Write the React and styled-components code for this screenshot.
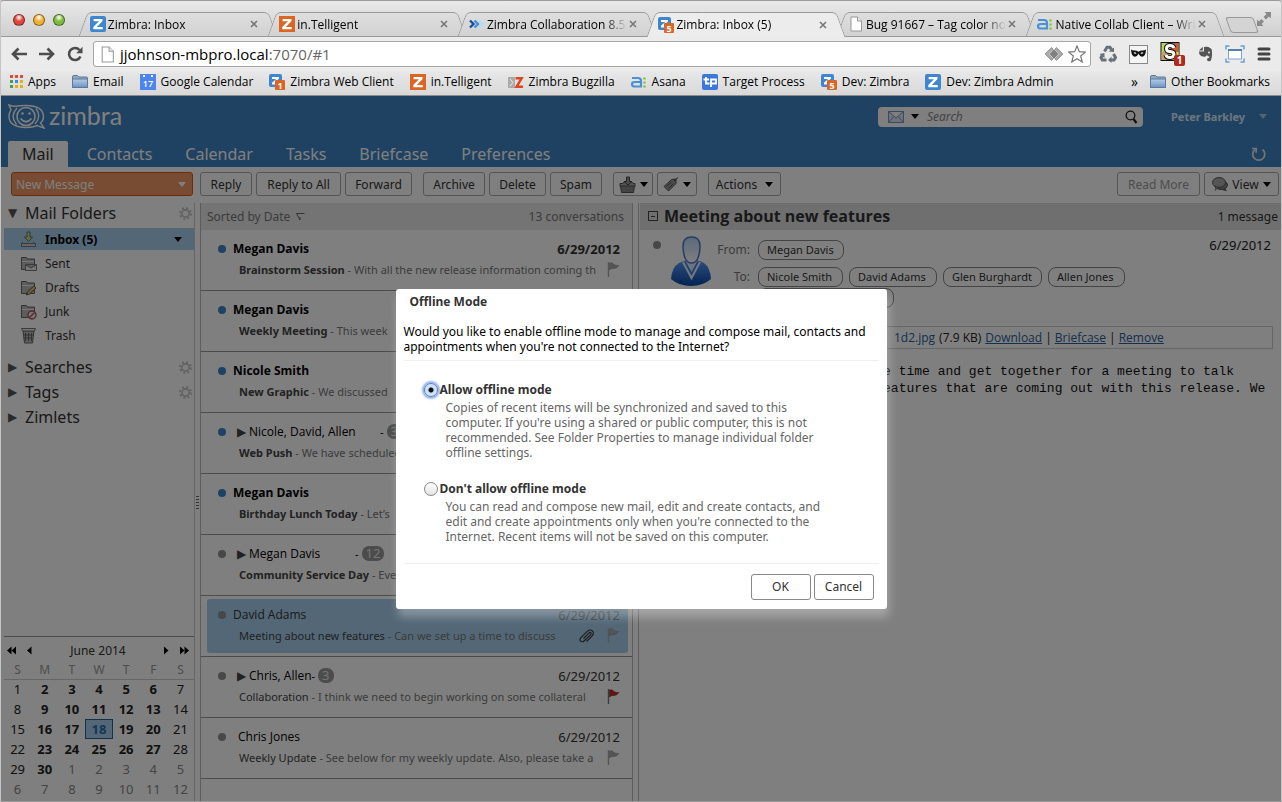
import React from 'react';
import styled, { createGlobalStyle, css } from 'styled-components';


const GlobalStyle = createGlobalStyle`
  * {
    box-sizing: border-box;
  }

  body {
    margin: 0;
    background: #c9c9c9;
    font-family: "Open Sans", "Noto Sans", sans-serif;
    font-size: 12px;
    color: #333;
  }

  a {
    color: inherit;
    text-decoration: none;
  }

  button, input {
    font-family: inherit;
    font-size: inherit;
    color: inherit;
  }
`;


/* ---------- icons ---------- */

const ZIcon = ({ color = '#3f86cf', badge, square }) => (
  <svg width="16" height="16" viewBox="0 0 16 16" aria-hidden="true">
    <rect width={badge ? 13 : 16} height={badge ? 13 : 16} rx={square ? 0 : 2} fill={color} />
    {badge
      ? <path d="M3 3h7v1.600L5.600 8.600H8V10.500H3V8.800L7.200 4.900H3z" fill="#fff" />
      : <path d="M3.600 3h8.900v2L6.900 11h5.800v2.200H3.300v-2.100L8.900 5.200H3.600z" fill="#fff" />}
    {badge && <rect x="6" y="6" width="10" height="10" rx="1" fill="#dc6526" />}
    {badge && <text x="11" y="14.500" fontSize="9" fontWeight="700" textAnchor="middle" fill="#fff">{badge}</text>}
  </svg>
);

const PageIcon = ({ size = 16 }) => (
  <svg width={size} height={size} viewBox="0 0 16 16" aria-hidden="true">
    <path d="M3 1h6.500L13.500 5v10H3z" fill="#fff" stroke="#999" />
    <path d="M9.500 1v4h4" fill="#eee" stroke="#999" />
  </svg>
);

const ChevronsIcon = () => (
  <svg width="16" height="16" viewBox="0 0 16 16" fill="none" strokeWidth="2.400" aria-hidden="true">
    <path d="M1 4.500l3.500 3.500L1 11.500" stroke="#1b4f9c" />
    <path d="M5.500 4.500L9 8l-3.500 3.500" stroke="#3f8fe0" />
    <path d="M10 4.500l3.500 3.500-3.500 3.500" stroke="#b5dcf7" />
  </svg>
);

const AsanaIcon = () => (
  <svg width="16" height="16" viewBox="0 0 16 16" aria-hidden="true">
    <path d="M1 4h6q3 0 3 3v5.500H4q-3 0-3-2.300T4 8h6" fill="none" stroke="#4a90d6" strokeWidth="2.200" />
    <g fill="#8dc63f">
      <circle cx="13.500" cy="4.500" r="1.300" />
      <circle cx="13.500" cy="8.500" r="1.300" />
      <circle cx="13.500" cy="12.500" r="1.300" />
    </g>
  </svg>
);

const FolderIcon = () => (
  <svg width="16" height="16" viewBox="0 0 16 16" aria-hidden="true">
    <defs>
      <linearGradient id="blueFolder" x1="0" y1="0" x2="0" y2="1">
        <stop offset="0" stopColor="#b4cdea" />
        <stop offset="1" stopColor="#6d93c0" />
      </linearGradient>
    </defs>
    <path d="M.5 3q0-1.500 1.500-1.500h3.500L7 3h7.500q1 0 1 1v9.500H.5z" fill="#8fa9c8" stroke="#5f7898" />
    <path d="M.5 5h15v8.500H.5z" fill="url(#blueFolder)" stroke="#5f7898" />
  </svg>
);

const AppsIcon = () => (
  <svg width="13" height="13" viewBox="0 0 13 13" aria-hidden="true">
    {['#dd4b39', '#dd4b39', '#dd4b39', '#4a9c5b', '#4285f4', '#e8b004', '#4a9c5b', '#e8b004', '#e8b004'].map((fill, i) => (
      <rect key={i} x={(i % 3) * 5} y={Math.floor(i / 3) * 5} width="3" height="3" fill={fill} />
    ))}
  </svg>
);

const CalendarIcon = () => (
  <svg width="16" height="16" viewBox="0 0 16 16" aria-hidden="true">
    <rect width="16" height="16" fill="#4b86f0" />
    <rect x="3" y="1" width="2" height="2" fill="#fff" />
    <rect x="11" y="1" width="2" height="2" fill="#fff" />
    <text x="8" y="13" fontSize="9" fontWeight="600" textAnchor="middle" fill="#fff">17</text>
  </svg>
);

const BugzillaIcon = () => (
  <svg width="16" height="16" viewBox="0 0 16 16" aria-hidden="true">
    <rect y="3" width="7" height="11" fill="#aaa" />
    <path d="M2 5l3 3.500-3 3.500" stroke="#eee" fill="none" />
    <path d="M7.500 4.200h6.200L8.500 12.800h6.500" fill="none" stroke="#e0451f" strokeWidth="2.400" />
  </svg>
);

const TargetIcon = () => (
  <svg width="16" height="16" viewBox="0 0 16 16" aria-hidden="true">
    <rect width="16" height="16" rx="2" fill="#3c78dc" />
    <path d="M4 3v6.500h3.500M1.500 5.500H7M9 13V5.500h5v4H9" fill="none" stroke="#fff" strokeWidth="1.800" />
  </svg>
);

const BackIcon = ({ flip }) => (
  <svg width="16" height="16" viewBox="0 0 16 16" fill="none" stroke="#4d4d4d" strokeWidth="2.600" aria-hidden="true">
    {flip ? <path d="M0 8h14M8.500 2.500L14 8l-5.500 5.500" /> : <path d="M16 8H2M7.500 2.500L2 8l5.500 5.500" />}
  </svg>
);

const ReloadIcon = () => (
  <svg width="16" height="16" viewBox="0 0 16 16" aria-hidden="true">
    <path d="M13.500 10.500A6 6 0 1 1 12.500 4" fill="none" stroke="#4d4d4d" strokeWidth="2.600" />
    <path d="M15.500.8v6.400H9.200z" fill="#4d4d4d" />
  </svg>
);

const DiamondsIcon = () => (
  <svg width="20" height="16" viewBox="0 0 20 16" aria-hidden="true">
    <path d="M7.500 1.500L1 8l6.500 6.500L9 13 4.500 8 9 3zM12.500 1.500L19 8l-6.500 6.500L11 13l4.500-5L11 3z" fill="#aaa" stroke="#999" />
    <path d="M10 3l4.500 5L10 13 5.500 8z" fill="#808080" />
  </svg>
);

const StarIcon = () => (
  <svg width="18" height="18" viewBox="0 0 18 18" aria-hidden="true">
    <path d="M9 1l2.300 5.700 6 .4-4.600 3.900 1.500 6L9 13.700 3.800 17l1.500-6L.7 7.100l6-.4z" fill="#fff" stroke="#777" strokeWidth="1.200" />
  </svg>
);

const RecycleIcon = () => (
  <svg width="18" height="18" viewBox="0 0 18 18" fill="none" stroke="#687078" strokeWidth="3" aria-hidden="true">
    <path d="M5.500 6.500L8 2.200h3l1.500 2.600" />
    <path d="M14.500 9l2 3.500-1.500 2.500h-3" />
    <path d="M7.500 15H3.300L2 12.500l1.500-2.500" />
    <path d="M9.500 6.500L15 7V2.500zM12.500 11.500v6.500L9 15zM.5 9l5-1v5z" fill="#687078" stroke="none" />
  </svg>
);

const MaskIcon = () => (
  <svg width="19" height="19" viewBox="0 0 19 19" aria-hidden="true">
    <rect x=".5" y=".5" width="18" height="18" fill="#f4f4f4" stroke="#888" />
    <path d="M2 4.500q1.500 1.200 4 1 2 0 3.500 1.200Q11 5.500 13 5.500q2.500.2 4-1-.3 7-4 7.300-2 0-3.500-3-1.500 3-3.500 3-3.700-.3-4-7.300z" fill="#111" />
    <path d="M4.500 8q1.500-1.500 3 .5-1.500.8-3-.5zM11.500 8.500q1.500-2 3-.5-1.500 1.300-3 .5z" fill="#fff" />
  </svg>
);

const StumbleIcon = () => (
  <svg width="26" height="24" viewBox="0 0 26 24" aria-hidden="true">
    <rect x="1" y=".5" width="18" height="18" fill="#b8d060" stroke="#111" />
    <path d="M10 1h8.500v9H10z" fill="#c0603c" />
    <path d="M1.500 10h8.500v8H1.500z" fill="#c8a070" />
    <path d="M10 10h8.500v8H10z" fill="#e8d040" />
    <path d="M14 6Q13 3.500 10 3.500 6.500 3.500 6.500 6.500t3.500 3q4 .3 4 3T10 15.500Q6.500 15.500 6 13" fill="none" stroke="#111" strokeWidth="5" />
    <path d="M14 6Q13 3.500 10 3.500 6.500 3.500 6.500 6.500t3.500 3q4 .3 4 3T10 15.500Q6.500 15.500 6 13" fill="none" stroke="#fff" strokeWidth="3" />
    <rect x="14" y="13" width="11" height="11" rx="2" fill="#b02a20" />
    <text x="19.500" y="22" fontSize="10" fontWeight="700" textAnchor="middle" fill="#fff">1</text>
  </svg>
);

const ElephantIcon = () => (
  <svg width="15" height="16" viewBox="0 0 15 16" aria-hidden="true">
    <path d="M1 4.500L4.800.8v3.700z" fill="#555" />
    <path d="M6 1q4-1 6 1 2 .5 2 4 .300 6-1.500 9-3.500 1-3.500-1.500 0-2 2-1.500l.5-1.500q-2 0-2.500-1.500-1 2.500-4 1.500Q1 10 1 5.500h5z" fill="#555" />
    <circle cx="11" cy="6.500" r="1" fill="#e8e8e8" />
  </svg>
);

const CaptureIcon = () => (
  <svg width="20" height="18" viewBox="0 0 20 18" fill="none" aria-hidden="true">
    <path d="M1 4.500V1h3.500M15.500 1H19v3.500M19 13.500V17h-3.500M4.500 17H1v-3.500" stroke="#6c9fd4" strokeWidth="1.500" />
    <rect x="3.500" y="4.500" width="13" height="9.500" fill="#fff" stroke="#7fa6cf" />
    <path d="M3 5h14" stroke="#5580b0" strokeWidth="2" />
  </svg>
);

const MenuIcon = () => (
  <svg width="14" height="14" viewBox="0 0 14 14" stroke="#444" strokeWidth="3" strokeLinecap="round" aria-hidden="true">
    <path d="M2 2h10M2 7h10M2 12h10" />
  </svg>
);

const FullscreenIcon = () => (
  <svg width="16" height="16" viewBox="0 0 16 16" aria-hidden="true">
    <path d="M8.500 1H15v6.500l-2-2-3 3L7.500 6l3-3zM1 8.500l2 2 2.500-2.500L8 10.500 5.500 13l2 2H1z" fill="#8a8a8a" />
  </svg>
);

const CloseIcon = () => (
  <svg width="8" height="8" viewBox="0 0 8 8" stroke="#777" strokeWidth="1.600" aria-hidden="true">
    <path d="M1 1l6 6M7 1L1 7" />
  </svg>
);

const LogoMark = () => (
  <svg width="37" height="25" viewBox="0 0 37 25" fill="none" stroke="#fff" strokeWidth="1.400" aria-hidden="true">
    <path d="M1 1q3 1.500 7 1.200Q11 1.500 18 1.500q17 0 17.500 11 0 4-3 6.500l3.500 5q-4-1-6.500-2.500Q25 23.500 18 23.500 1 23 1 12.500q0-4 2-6.500z" />
    <path d="M28 4.500q6 8-1 15.500M9 4q-7.500 8-.5 16.500" />
    <circle cx="18" cy="12.500" r="9" strokeWidth="1.600" />
    <path d="M12.500 14.500q5.500 6.500 11 0" strokeWidth="1.800" />
    <circle cx="14.500" cy="9.500" r="1.300" fill="#fff" stroke="none" />
    <circle cx="21.500" cy="9.500" r="1.300" fill="#fff" stroke="none" />
  </svg>
);

const EnvelopeIcon = () => (
  <svg width="16" height="12" viewBox="0 0 16 12" fill="#dfe8f6" stroke="#7890b8" aria-hidden="true">
    <path d="M.5.5h15v11H.5zM.5.5L8 7l7.500-6.500M.5 11.500l5.500-6M15.500 11.500l-5.500-6" />
  </svg>
);

const SearchIcon = () => (
  <svg width="13" height="14" viewBox="0 0 13 14" fill="none" stroke="#222" aria-hidden="true">
    <circle cx="5.500" cy="5.500" r="4.300" strokeWidth="1.300" />
    <path d="M8.500 9l3 4" strokeWidth="2.200" />
  </svg>
);

const RefreshIcon = () => (
  <svg width="16" height="16" viewBox="0 0 16 16" fill="none" stroke="#e8e8e8" strokeWidth="1.700" aria-hidden="true">
    <path d="M11.500 3.500A6 6 0 1 1 4 3.500" />
    <path d="M1 2.500h4.200v4.200" />
  </svg>
);

const GearIcon = () => (
  <svg width="13" height="13" viewBox="0 0 13 13" fill="none" stroke="#c4c4c4" aria-hidden="true">
    <circle cx="6.500" cy="6.500" r="3.600" strokeWidth="1.600" />
    <circle cx="6.500" cy="6.500" r="5.400" strokeWidth="2" strokeDasharray="2.100 2.140" />
  </svg>
);

const MoveIcon = () => (
  <svg width="17" height="17" viewBox="0 0 17 17" aria-hidden="true">
    <path d="M1 7.500h3l1-1.500h8l1 1.500h2v3H1z" fill="#aaa" stroke="#555" />
    <path d="M1.500 10h14l-1 6.500h-12z" fill="#888" stroke="#555" />
    <path d="M7.500 1h3v4.500h2.500L9 9 5 5.500h2.500z" fill="#999" stroke="#444" />
  </svg>
);

const TagIcon = () => (
  <svg width="16" height="15" viewBox="0 0 16 15" aria-hidden="true">
    <path d="M1 9.500L8.500 2.500l4.500-.5v4.500L5.500 14z" fill="#999" stroke="#555" />
    <path d="M3.500 9.500l5-4.500M5.500 11.500l5-5" stroke="#555" />
    <path d="M11 4L15 .5" stroke="#444" />
  </svg>
);

const ChatIcon = () => (
  <svg width="16" height="15" viewBox="0 0 16 15" aria-hidden="true">
    <path d="M9 12q3 2.500 6 2-2-2-1.500-4z" fill="#666" />
    <ellipse cx="9" cy="8" rx="6.500" ry="4.500" fill="#888" stroke="#555" />
    <ellipse cx="7" cy="5.500" rx="6.500" ry="5" fill="#aaa" stroke="#555" />
    <path d="M4 10l-1 3.500L7 10z" fill="#999" stroke="#555" strokeWidth=".5" />
  </svg>
);

const FlagIcon = ({ red }) => (
  <svg width="13" height="15" viewBox="0 0 13 15" aria-hidden="true">
    <path d="M1.500 0v15" stroke={red ? '#778' : '#aaa'} strokeWidth="1.400" />
    <path d="M2.500 1q3-1 4.500 1.500 2 1.300 5 1Q10 6.500 7 6.500 4.500 6 2.500 8z" fill={red ? '#c22c22' : '#aaa'} stroke={red ? '#802020' : '#888'} strokeWidth=".5" />
  </svg>
);

const ClipIcon = () => (
  <svg width="15" height="14" viewBox="0 0 15 14" fill="none" stroke="#333" strokeWidth="1.100" aria-hidden="true">
    <path d="M4.500 9.500l5.700-5.700q1-.8 1.700 0t-.2 1.800L5 12q-1.800 1.500-3.300.2T1.900 8.700L8.300 2.300Q11 0 13.200 1.800t.2 4.900L7.500 12.500" />
  </svg>
);

const AvatarIcon = () => (
  <svg width="40" height="50" viewBox="0 0 40 50" aria-hidden="true">
    <defs>
      <linearGradient id="shirt" x1="0" y1="0" x2="0" y2="1">
        <stop offset="0" stopColor="#5a9af8" />
        <stop offset="1" stopColor="#0848a8" />
      </linearGradient>
      <linearGradient id="face" x1="0" y1="0" x2="0" y2="1">
        <stop offset="0" stopColor="#b8d0f8" />
        <stop offset="1" stopColor="#ffffff" />
      </linearGradient>
    </defs>
    <path d="M8 27q5-2 8-3h9q4 1 8 3 6 4 7 16-8 7-20 7T0 43Q1 31 8 27z" fill="url(#shirt)" />
    <path d="M12 26l8.500 16L29 26" fill="#4080e0" stroke="#e8f0ff" strokeWidth="2" />
    <path d="M14 24l6.500 12L27 24z" fill="#dce8ff" />
    <path d="M9 44l2 4M31 44l-2 4" stroke="#0a3c90" />
    <path d="M12 10Q12 1 20.500 1T29 10q0 8-2.500 13-2 4-6 4t-6-4Q12 18 12 10z" fill="url(#face)" stroke="#4878d0" strokeWidth="1.500" />
  </svg>
);

const SortIcon = () => (
  <svg width="9" height="9" viewBox="0 0 9 9" fill="none" stroke="#666" aria-hidden="true">
    <path d="M8.500 1.500h-8l3.500 6.500v-3" />
  </svg>
);

const StepIcon = ({ left, twice }) => (
  <svg width={twice ? 9 : 5} height="9" viewBox={twice ? '0 0 9 9' : '0 0 5 9'} fill="#000" aria-hidden="true">
    <path d={left ? 'M4.500.5v8L0 4.500z' : 'M0 .5v8l4.500-4z'} />
    {twice && <path d={left ? 'M9 .5v8L4.500 4.500z' : 'M4.500.5v8L9 4.500z'} />}
  </svg>
);

/* Folder glyphs share a drawer shape with a small mark over it. */
const FolderGlyph = ({ kind }) => (
  <svg width="17" height="17" viewBox="0 0 17 17" fill="none" aria-hidden="true">
    {kind === 'inbox' && (
      <>
        <path d="M2.500 10.500L1 15.500h14l-1.500-5" stroke="#888" />
        <rect x="1.500" y="12.500" width="14" height="3" fill="#ccc" stroke="#777" />
        <path d="M7 1h3v5h2.500l-4 4.500-4-4.500H7z" fill="#c8d4a0" stroke="#667040" />
      </>
    )}
    {kind === 'trash' && (
      <>
        <path d="M3 4l1.500 12h8L14 4z" fill="#bbb" stroke="#666" />
        <path d="M5.500 6v8M8.500 6v8M11.500 6v8M4 8h9M4.500 11h8" stroke="#666" />
        <path d="M1.500 1.500h14l-1 2.500h-12z" fill="#eee" stroke="#777" />
      </>
    )}
    {['sent', 'drafts', 'junk'].includes(kind) && (
      <>
        <path d="M1.500 14.500v-12h5l1 1.500h7v10.500z" fill="#bbb" stroke="#666" />
        <path d="M2 6.500h12" stroke="#eee" />
      </>
    )}
    {kind === 'sent' && <path d="M5.500 9.500h11v6h-11zM6 10l5 3 5-3" fill="#eee" stroke="#777" />}
    {kind === 'drafts' && <path d="M6.500 16l.8-3 6.500-6 2.200 2-6.500 6z" fill="#e0c070" stroke="#554" />}
    {kind === 'junk' && (
      <>
        <circle cx="12" cy="12" r="4" fill="#eee" stroke="#b05060" strokeWidth="1.400" />
        <path d="M9.500 14.500l5-5" stroke="#b05060" strokeWidth="1.400" />
      </>
    )}
  </svg>
);


/* ---------- browser window ---------- */

const Window = styled.div`
  display: flex;
  flex-direction: column;
  height: 100vh;
  min-height: 600px;
  border: 1px solid #9a9a9a;
  border-left-color: #c4c4c4;
  border-right-color: #c4c4c4;
  border-radius: 4px 4px 0 0;
  overflow: hidden;
`;

const TabStrip = styled.div`
  display: flex;
  align-items: flex-end;
  height: 36px;
  padding-left: 12px;
  border-bottom: 1px solid #999;
  background: linear-gradient(#e9e9e9, #cfcfcf);
`;

const Lights = styled.div`
  display: flex;
  gap: 8px;
  width: 70px;
  padding-bottom: 10px;
`;

const Light = styled.button`
  width: 12px;
  height: 12px;
  padding: 0;
  border: 1px solid rgba(0, 0, 0, 0.45);
  border-radius: 50%;
  background: radial-gradient(circle at 50% 25%, #fff 0%, ${props => props.$color} 45%);
`;

const tabEdge = css`
  content: "";
  position: absolute;
  z-index: -1;
  top: 0;
  bottom: 0;
  border: 1px solid #999;
  border-bottom: none;
  background: ${props => props.$active ? '#ececec' : 'linear-gradient(#dedede, #d2d2d2)'};
`;

const Tab = styled.div`
  position: relative;
  isolation: isolate;
  z-index: ${props => props.$active ? 2 : 1};
  display: flex;
  flex: 0 1 190px;
  align-items: center;
  gap: 2px;
  min-width: 0;
  height: ${props => props.$active ? 25 : 24}px;
  margin-bottom: ${props => props.$active ? '-1px' : 0};
  padding: 0 14px 0 7px;
  color: #000;

  &::before {
    ${tabEdge}
    left: 0;
    right: 30%;
    border-right: none;
    border-top-left-radius: 5px;
    transform: skewX(-20deg);
  }

  &::after {
    ${tabEdge}
    left: 30%;
    right: 0;
    border-left: none;
    border-top-right-radius: 5px;
    transform: skewX(20deg);
  }

  svg {
    flex: none;
  }
`;

const TabTitle = styled.a`
  flex: 1;
  overflow: hidden;
  white-space: nowrap;
  mask-image: linear-gradient(to right, #000 84%, transparent);
`;

const PlainButton = styled.button`
  display: inline-flex;
  align-items: center;
  flex: none;
  padding: 0;
  border: none;
  background: none;
`;

const NewTab = styled.button`
  flex: none;
  width: 28px;
  height: 16px;
  margin: 0 0 3px 8px;
  border: 1px solid #999;
  border-radius: 3px;
  background: #d4d4d4;
  transform: skewX(20deg);
`;

const Fullscreen = styled(PlainButton)`
  margin: 0 9px 9px auto;
`;

const AddressRow = styled.div`
  display: flex;
  align-items: center;
  gap: 12px;
  height: 34px;
  padding: 0 10px;
  background: #ebebeb;
`;

const Omnibox = styled.div`
  display: flex;
  flex: 1;
  align-items: center;
  gap: 4px;
  height: 26px;
  margin-left: -2px;
  padding: 0 4px 0 5px;
  border: 1px solid #a8a8a8;
  border-radius: 3px;
  background: #fff;
`;

const Address = styled.div`
  flex: 1;
  color: #666;
  font-size: 15px;

  b {
    color: #000;
    font-weight: 400;
  }
`;

const Extensions = styled.div`
  display: flex;
  align-items: center;
  gap: 12px;
  margin-left: -4px;
`;

const BookmarkRow = styled.nav`
  display: flex;
  align-items: center;
  gap: 16px;
  height: 25px;
  padding: 0 11px 3px 9px;
  border-bottom: 1px solid #8c8c8c;
  background: linear-gradient(#e8e8e8, #d8d8d8);
`;

const Bookmark = styled.a`
  display: flex;
  align-items: center;
  gap: 5px;
  color: #000;
  white-space: nowrap;

  &.more {
    margin-left: auto;
    margin-right: -4px;
    font-size: 14px;
  }
`;


/* ---------- mail application ---------- */

const Mail = styled.div`
  position: relative;
  display: flex;
  flex: 1;
  flex-direction: column;
  min-height: 0;
  background: #fff;
  font-family: "Noto Sans", "Open Sans", sans-serif;
`;

const Header = styled.header`
  display: flex;
  flex-direction: column;
  justify-content: space-between;
  height: 71px;
  padding: 0 14px 0 7px;
  background: #3e84c4;
  color: #fff;
`;

const HeaderRow = styled.div`
  display: flex;
  align-items: center;
  height: 41px;
`;

const Logo = styled.a`
  display: flex;
  align-items: center;
  gap: 4px;
  margin-right: auto;
  color: #fff;
  font-family: Lato, sans-serif;
  font-size: 25px;
  line-height: 24px;

  span {
    padding-bottom: 4px;
  }
`;

const SearchBox = styled.form`
  display: flex;
  align-items: center;
  width: 265px;
  height: 20px;
  padding: 0 5px 0 10px;
  border-radius: 4px;
  background: #fff;

  input {
    flex: 1;
    min-width: 0;
    padding: 0 8px;
    border: none;
    outline: none;
    background: none;
  }

  input::placeholder {
    color: #888;
    font-style: italic;
  }
`;

const Arrow = styled.span`
  display: inline-block;
  flex: none;
  border: 4px solid transparent;
  border-top: 5px solid ${props => props.$color || '#000'};
  border-bottom: none;

  ${SearchBox} & {
    margin-left: 7px;
  }
`;

const Account = styled(PlainButton)`
  justify-content: space-between;
  width: 96px;
  margin-left: 28px;
  color: #d8ecfc;
  font-size: 11px;
  font-weight: 700;
`;

const Apps = styled.nav`
  display: flex;
  gap: 5px;
`;

const AppTab = styled.a`
  height: 26px;
  padding: 0 14px;
  border-radius: 2px 2px 0 0;
  background: ${props => props.$active ? '#fff' : 'none'};
  color: ${props => props.$active ? '#333' : '#fff'};
  font-size: 16px;
  line-height: 26px;
`;

const RefreshButton = styled(PlainButton)`
  margin-left: auto;
`;

const Toolbar = styled.div`
  display: flex;
  align-items: center;
  gap: 4px;
  height: 36px;
  padding: 0 2px 2px 10px;
`;

const ToolButton = styled.button`
  display: flex;
  align-items: center;
  justify-content: center;
  gap: 4px;
  width: ${props => props.$width}px;
  height: 24px;
  padding: 0;
  border: 1px solid #aaa;
  border-radius: 3px;
  background: #fff;
  white-space: nowrap;

  &.compose {
    justify-content: space-between;
    margin-right: 3px;
    padding: 0 6px 0 4px;
    border-color: #d8581c;
    background: #ee9866;
    color: #fff;
  }

  &.group {
    margin-left: 7px;
  }

  &.spaced {
    gap: 8px;
  }

  &.right {
    margin-left: auto;
  }

  &:disabled {
    color: #999;
  }
`;

const Columns = styled.div`
  display: grid;
  grid-template-columns: 191px 6px 432px 6px 1fr;
  flex: 1;
  min-height: 0;
  padding-left: 3px;
`;

const Sidebar = styled.aside`
  display: flex;
  flex-direction: column;
  border-right: 1px solid #ccc;
`;

const SectionHeader = styled.h2`
  display: flex;
  align-items: center;
  height: 25px;
  margin: 0;
  padding: 0 2px 5px 4px;
  font-size: 16px;
  font-weight: 400;
  line-height: 20px;

  svg {
    margin-left: auto;
  }
`;

const Disclosure = styled.span`
  display: inline-block;
  width: 17px;
  color: #555;
  font-family: "DejaVu Sans", sans-serif;
  font-size: 12px;
`;

const FolderList = styled.div`
  padding-bottom: 10px;
`;

const Folder = styled.a`
  display: flex;
  align-items: center;
  gap: 8px;
  height: 24px;
  padding: 0 12px 0 16px;

  ${props => props.$selected && css`
    height: 22px;
    margin-bottom: 1px;
    background: #a6cfee;
    color: #000;
    font-weight: 700;
  `}

  ${Arrow} {
    margin-left: auto;
  }
`;

const MiniCalendar = styled.section`
  margin-top: auto;
  padding: 3px 0 2px;
  border-top: 1px solid #999;
`;

const MonthRow = styled.div`
  display: flex;
  align-items: center;
  height: 21px;
  padding: 0 5px 0 3px;
  color: #333;

  span {
    flex: 1;
    text-align: center;
  }

  button {
    width: 20px;
  }

  span ~ button {
    justify-content: flex-end;
  }
`;

const MonthTable = styled.table`
  width: 100%;
  border-collapse: collapse;
  table-layout: fixed;
  text-align: center;

  th, td {
    height: 20px;
    padding: 0;
    line-height: 16px;
  }

  th {
    height: 18px;
    border-bottom: 1px solid #ccc;
    color: #999;
    font-weight: 400;
  }
`;

const Day = styled.td`
  color: ${props => props.$muted ? '#888' : '#222'};
  font-size: 13px;
  font-weight: ${props => props.$bold ? 700 : 400};

  ${props => props.$today && css`
    outline: 1px solid #2a6098;
    outline-offset: -1px;
    background: #a6cfee;
    color: #2a70b0;
  `}
`;

const Sash = styled.div`
  display: flex;
  flex-direction: column;
  justify-content: center;
  align-items: center;
  gap: 2px;
  border-right: 1px solid #bbb;

  i {
    width: 3px;
    height: 1px;
    background: #666;
  }
`;

const List = styled.main`
  display: flex;
  flex-direction: column;
  min-width: 0;
  border-right: 1px solid #bbb;
`;

const PaneHeader = styled.div`
  display: flex;
  align-items: center;
  justify-content: space-between;
  flex: none;
  height: 27px;
  padding: 0 8px 0 6px;
  background: ${props => props.$dark ? '#dedede' : '#e8e8e8'};
  color: #777;

  &.reading {
    justify-content: flex-start;
    gap: 6px;
    padding: 0 3px 1px 8px;
    color: #333;
  }

  h1 {
    flex: 1;
    margin: 0;
    font-family: "Open Sans", sans-serif;
    font-size: 16px;
    font-weight: 700;
  }
`;

const SortLabel = styled.span`
  display: flex;
  align-items: center;
  gap: 6px;
`;

const Row = styled.article`
  display: flex;
  flex: none;
  flex-direction: column;
  height: 61px;
  padding: 3px 4px 3px 6px;
  border-bottom: 1px solid #999;
  color: #000;
`;

const RowBody = styled.div`
  flex: 1;
  padding: 5px 8px 0 11px;
  border-radius: 3px;
  background: ${props => props.$selected ? '#a6cfee' : 'none'};
`;

const RowLine = styled.div`
  display: flex;
  align-items: center;
  height: 21px;
  font-size: 11px;
  white-space: nowrap;

  &.subject {
    padding-left: 21px;
  }

  &.subject svg {
    flex: none;
    margin-left: 4px;
  }

  &.subject svg + svg {
    margin-left: 13px;
  }
`;

const Dot = styled.span`
  flex: none;
  width: 8px;
  height: 8px;
  border-radius: 50%;
  background: ${props => props.$unread ? '#3e84c4' : '#909090'};
`;

const Sender = styled.span`
  min-width: ${props => props.$width || 0}px;
  margin-left: ${props => props.$indent ? 12 : 7}px;
  color: ${props => props.$dim ? '#333' : '#000'};
  font-size: 12px;
  font-weight: ${props => props.$unread ? 700 : 400};
  font-family: "Open Sans", sans-serif;
`;

const Expander = styled.span`
  width: 12px;
  margin-left: 11px;
  color: #444;
  font-family: "DejaVu Sans", sans-serif;
  font-size: 12px;

  & + ${Sender} {
    margin-left: 0;
  }
`;

const Count = styled.span`
  height: 15px;
  margin-left: 3px;
  padding: 0 4px;
  border-radius: 7px;
  background: #999;
  color: #e8e8e8;
  font-size: 13px;
  line-height: 15px;
`;

const RowDate = styled.time`
  margin-left: auto;
  color: ${props => props.$dim ? '#777' : '#333'};
  font-size: 13px;
  font-weight: ${props => props.$bold ? 700 : 400};
`;

const Subject = styled.div`
  flex: 1;
  overflow: hidden;
  color: #777;

  b {
    color: #444;
    font-weight: ${props => props.$bold ? 700 : 400};
  }
`;

const Reading = styled.section`
  display: flex;
  flex-direction: column;
  min-width: 0;
  padding-left: 1px;
`;

const CollapseButton = styled.button`
  width: 10px;
  height: 10px;
  padding: 0;
  border: 1px solid #444;
  background: linear-gradient(#444, #444) center / 4px 1px no-repeat;
`;

const Message = styled.div`
  padding: 6px 8px 0 9px;
`;

const MessageHead = styled.div`
  display: flex;
  align-items: flex-start;
  height: 90px;

  ${Dot} {
    margin: 5px 10px 0 4px;
  }

  time {
    margin: 2px 2px 0 auto;
    color: #222;
    font-size: 13px;
    line-height: 14px;
  }
`;

const Fields = styled.dl`
  display: grid;
  grid-template-columns: 39px auto;
  gap: 0 8px;
  align-content: start;
  margin: 0;
  padding-top: 4px;

  dt {
    color: #777;
    line-height: 20px;
    text-align: right;
  }

  dd {
    display: flex;
    gap: 6px;
    margin: 0 0 7px;
  }

  dd.wrapped {
    grid-column: 2;
    margin-top: -6px;
  }
`;

const Bubble = styled.span`
  width: ${props => props.$width}px;
  height: 20px;
  padding: 0 8px;
  border: 1px solid #888;
  border-radius: 8px;
  font-size: 11px;
  line-height: 18px;
  white-space: nowrap;
`;

const Attachment = styled.div`
  display: flex;
  align-items: center;
  gap: 3px;
  height: 23px;
  padding-left: 244px;
  border: 1px solid #ccc;
  color: #222;
  font-family: "Open Sans", sans-serif;

  a {
    color: #2a609c;
  }

  a.action {
    text-decoration: underline;
  }

  span {
    margin: 0 1px;
  }
`;

const MessageText = styled.pre`
  margin: 14px 0 0;
  color: #111;
  font-family: "Liberation Mono", monospace;
  font-size: 13px;
  line-height: 17px;
`;


/* ---------- dialog ---------- */

const Overlay = styled.div`
  position: absolute;
  inset: 0;
  display: grid;
  place-items: center;
  background: rgba(0, 0, 0, 0.5);
`;

const Dialog = styled.div`
  width: 491px;
  padding: 5px 8px 9px;
  border-radius: 3px;
  background: #fff;
  box-shadow: 2px 8px 10px rgba(255, 255, 255, 0.3);
  line-height: 15px;

  h2 {
    margin: 0 6px 14px;
    font-size: 12px;
    font-weight: 700;
    line-height: 16px;
  }

  p {
    margin: 0;
  }
`;

const Intro = styled.p`
  padding-bottom: 6px;
  border-bottom: 1px solid #eee;
  color: #000;
  white-space: nowrap;
`;

const Options = styled.fieldset`
  display: grid;
  gap: 21px;
  margin: 0;
  padding: 21px 0 19px 20px;
  border: none;
  border-bottom: 1px solid #eee;
`;

const Option = styled.div`
  label {
    display: flex;
    align-items: center;
    gap: 2px;
    height: 16px;
    font-weight: 700;
  }

  input {
    appearance: none;
    width: 14px;
    height: 14px;
    margin: 0;
    border: 1px solid #888;
    border-radius: 50%;
    background: linear-gradient(#fff, #e4e4e4);
  }

  input:checked {
    border-color: #5a78b8;
    background: radial-gradient(circle, #111 0 2px, #c4dcfa 3px, #e8f2ff);
    box-shadow: 0 0 2px 2px #8fb0ea;
  }

  p {
    margin: 2px 0 0 22px;
    color: #666;
    white-space: nowrap;
  }
`;

const DialogButtons = styled.div`
  display: flex;
  justify-content: flex-end;
  gap: 3px;
  padding: 10px 5px 0 0;

  button {
    width: 60px;
    height: 26px;
    padding: 0;
    border: 1px solid #888;
    border-radius: 3px;
    background: #fff;
  }
`;


/* ---------- data ---------- */

const tabs = [
  { title: 'Zimbra: Inbox', icon: <ZIcon /> },
  { title: 'in.Telligent', icon: <ZIcon color="#dc6526" square /> },
  { title: 'Zimbra Collaboration 8.5:', icon: <ChevronsIcon /> },
  { title: 'Zimbra: Inbox (5)', icon: <ZIcon badge="5" />, active: true },
  { title: 'Bug 91667 – Tag color no', icon: <PageIcon /> },
  { title: 'Native Collab Client – Writ', icon: <AsanaIcon /> },
];

const bookmarks = [
  { label: 'Apps', icon: <AppsIcon /> },
  { label: 'Email', icon: <FolderIcon /> },
  { label: 'Google Calendar', icon: <CalendarIcon /> },
  { label: 'Zimbra Web Client', icon: <ZIcon badge="1" /> },
  { label: 'in.Telligent', icon: <ZIcon color="#dc6526" square /> },
  { label: 'Zimbra Bugzilla', icon: <BugzillaIcon /> },
  { label: 'Asana', icon: <AsanaIcon /> },
  { label: 'Target Process', icon: <TargetIcon /> },
  { label: 'Dev: Zimbra', icon: <ZIcon badge="5" /> },
  { label: 'Dev: Zimbra Admin', icon: <ZIcon /> },
];

const appNames = ['Mail', 'Contacts', 'Calendar', 'Tasks', 'Briefcase', 'Preferences'];

const folders = [
  { kind: 'inbox', label: 'Inbox (5)', selected: true },
  { kind: 'sent', label: 'Sent' },
  { kind: 'drafts', label: 'Drafts' },
  { kind: 'junk', label: 'Junk' },
  { kind: 'trash', label: 'Trash' },
];

const conversations = [
  { from: 'Megan Davis', unread: true, subject: 'Brainstorm Session', preview: 'With all the new release information coming th', date: '6/29/2012' },
  { from: 'Megan Davis', unread: true, subject: 'Weekly Meeting', preview: 'This week' },
  { from: 'Nicole Smith', unread: true, subject: 'New Graphic', preview: 'We discussed' },
  { from: 'Nicole, David, Allen', dot: true, count: 3, width: 131, bold: true, subject: 'Web Push', preview: 'We have scheduled' },
  { from: 'Megan Davis', unread: true, subject: 'Birthday Lunch Today', preview: 'Let’s' },
  { from: 'Megan Davis', count: 12, width: 106, bold: true, subject: 'Community Service Day', preview: 'Eve' },
  { from: 'David Adams', selected: true, subject: 'Meeting about new features', preview: 'Can we set up a time to discuss', date: '6/29/2012', clip: true },
  { from: 'Chris, Allen', count: 3, subject: 'Collaboration', preview: 'I think we need to begin working on some collateral', date: '6/29/2012', red: true },
  { from: 'Chris Jones', indent: true, subject: 'Weekly Update', preview: 'See below for my weekly update. Also, please take a', date: '6/29/2012' },
];

const weeks = [
  [1, 2, 3, 4, 5, 6, 7],
  [8, 9, 10, 11, 12, 13, 14],
  [15, 16, 17, 18, 19, 20, 21],
  [22, 23, 24, 25, 26, 27, 28],
  [29, 30, 1, 2, 3, 4, 5],
  [6, 7, 8, 9, 10, 11, 12],
];

const isNextMonth = (week, day) => week > 3 && day < 15;


/* ---------- views ---------- */

function Browser() {
  return (
    <>
      <TabStrip>
        <Lights>
          <Light $color="#e0443a" aria-label="Close window" />
          <Light $color="#f0b030" aria-label="Minimize window" />
          <Light $color="#7cbc3c" aria-label="Zoom window" />
        </Lights>
        {tabs.map(tab => (
          <Tab key={tab.title} $active={tab.active}>
            {tab.icon}
            <TabTitle href="#">{tab.title}</TabTitle>
            <PlainButton aria-label="Close tab"><CloseIcon /></PlainButton>
          </Tab>
        ))}
        <NewTab aria-label="New tab" />
        <Fullscreen aria-label="Full screen"><FullscreenIcon /></Fullscreen>
      </TabStrip>
      <AddressRow>
        <PlainButton aria-label="Back"><BackIcon /></PlainButton>
        <PlainButton aria-label="Forward"><BackIcon flip /></PlainButton>
        <PlainButton aria-label="Reload"><ReloadIcon /></PlainButton>
        <Omnibox>
          <PageIcon size={17} />
          <Address><b>jjohnson-mbpro.local</b>:7070/#1</Address>
          <DiamondsIcon />
          <StarIcon />
        </Omnibox>
        <Extensions>
          <RecycleIcon />
          <MaskIcon />
          <StumbleIcon />
          <ElephantIcon />
          <CaptureIcon />
          <PlainButton aria-label="Menu"><MenuIcon /></PlainButton>
        </Extensions>
      </AddressRow>
      <BookmarkRow>
        {bookmarks.map(item => (
          <Bookmark key={item.label} href="#">{item.icon}{item.label}</Bookmark>
        ))}
        <Bookmark className="more" href="#">»</Bookmark>
        <Bookmark href="#"><FolderIcon />Other Bookmarks</Bookmark>
      </BookmarkRow>
    </>
  );
}

function MailHeader() {
  return (
    <Header>
      <HeaderRow>
        <Logo href="#"><LogoMark /><span>zimbra</span></Logo>
        <SearchBox>
          <EnvelopeIcon />
          <Arrow />
          <input aria-label="Search" placeholder="Search" />
          <SearchIcon />
        </SearchBox>
        <Account>Peter Barkley <Arrow $color="#a8c8e0" /></Account>
      </HeaderRow>
      <Apps>
        {appNames.map((name, i) => (
          <AppTab key={name} href="#" $active={i === 0}>{name}</AppTab>
        ))}
        <RefreshButton aria-label="Refresh"><RefreshIcon /></RefreshButton>
      </Apps>
    </Header>
  );
}

function MailToolbar() {
  return (
    <Toolbar>
      <ToolButton className="compose" $width={182}>New Message <Arrow $color="#fff" /></ToolButton>
      <ToolButton $width={52}>Reply</ToolButton>
      <ToolButton $width={85}>Reply to All</ToolButton>
      <ToolButton $width={67}>Forward</ToolButton>
      <ToolButton className="group" $width={62}>Archive</ToolButton>
      <ToolButton $width={57}>Delete</ToolButton>
      <ToolButton $width={52}>Spam</ToolButton>
      <ToolButton className="group" $width={40} aria-label="Move"><MoveIcon /><Arrow /></ToolButton>
      <ToolButton $width={40} aria-label="Tag"><TagIcon /><Arrow /></ToolButton>
      <ToolButton className="group spaced" $width={73}>Actions <Arrow /></ToolButton>
      <ToolButton className="right" $width={83} disabled>Read More</ToolButton>
      <ToolButton $width={75}><ChatIcon />View <Arrow /></ToolButton>
    </Toolbar>
  );
}

function Folders() {
  return (
    <Sidebar>
      <SectionHeader><Disclosure>▼</Disclosure>Mail Folders<GearIcon /></SectionHeader>
      <FolderList>
        {folders.map(folder => (
          <Folder key={folder.kind} href="#" $selected={folder.selected}>
            <FolderGlyph kind={folder.kind} />
            {folder.label}
            {folder.selected && <Arrow />}
          </Folder>
        ))}
      </FolderList>
      <SectionHeader><Disclosure>▶</Disclosure>Searches<GearIcon /></SectionHeader>
      <SectionHeader><Disclosure>▶</Disclosure>Tags<GearIcon /></SectionHeader>
      <SectionHeader><Disclosure>▶</Disclosure>Zimlets</SectionHeader>
      <MiniCalendar>
        <MonthRow>
          <PlainButton aria-label="Previous year"><StepIcon left twice /></PlainButton>
          <PlainButton aria-label="Previous month"><StepIcon left /></PlainButton>
          <span>June 2014</span>
          <PlainButton aria-label="Next month"><StepIcon /></PlainButton>
          <PlainButton aria-label="Next year"><StepIcon twice /></PlainButton>
        </MonthRow>
        <MonthTable>
          <thead>
            <tr>{['S', 'M', 'T', 'W', 'T', 'F', 'S'].map((d, i) => <th key={i}>{d}</th>)}</tr>
          </thead>
          <tbody>
            {weeks.map((week, w) => (
              <tr key={w}>
                {week.map((day, d) => (
                  <Day
                    key={d}
                    $muted={isNextMonth(w, day)}
                    $bold={d > 0 && d < 6 && !isNextMonth(w, day)}
                    $today={day === 18}
                  >
                    {day}
                  </Day>
                ))}
              </tr>
            ))}
          </tbody>
        </MonthTable>
      </MiniCalendar>
    </Sidebar>
  );
}

function Conversation({ item }) {
  return (
    <Row>
      <RowBody $selected={item.selected}>
        <RowLine>
          <Dot $unread={item.unread || item.dot} />
          {item.count && <Expander>▶</Expander>}
          <Sender $unread={item.unread} $indent={item.indent} $width={item.width} $dim={item.selected}>
            {item.from}
          </Sender>
          {item.count && <>-<Count>{item.count}</Count></>}
          {item.date && <RowDate $bold={item.unread} $dim={item.selected}>{item.date}</RowDate>}
        </RowLine>
        <RowLine className="subject">
          <Subject $bold={item.unread || item.bold}><b>{item.subject}</b> - {item.preview}</Subject>
          {item.clip && <ClipIcon />}
          <FlagIcon red={item.red} />
        </RowLine>
      </RowBody>
    </Row>
  );
}

function ReadingPane() {
  return (
    <Reading>
      <PaneHeader className="reading" $dark>
        <CollapseButton aria-label="Collapse" />
        <h1>Meeting about new features</h1>
        1 message
      </PaneHeader>
      <Message>
        <MessageHead>
          <Dot />
          <AvatarIcon />
          <Fields>
            <dt>From:</dt>
            <dd><Bubble $width={86}>Megan Davis</Bubble></dd>
            <dt>To:</dt>
            <dd>
              <Bubble $width={85}>Nicole Smith</Bubble>
              <Bubble $width={88}>David Adams</Bubble>
              <Bubble $width={99}>Glen Burghardt</Bubble>
              <Bubble $width={77}>Allen Jones</Bubble>
            </dd>
            <dd className="wrapped"><Bubble $width={136} /></dd>
          </Fields>
          <time>6/29/2012</time>
        </MessageHead>
        <Attachment>
          <a href="#">1d2.jpg</a>
          <span>(7.9 KB)</span>
          <a className="action" href="#">Download</a>|
          <a className="action" href="#">Briefcase</a>|
          <a className="action" href="#">Remove</a>
        </Attachment>
        <MessageText>
          {'Hi folks, can we set aside some time and get together for a meeting to talk\n'}
          {'about all of the planned new features that are coming out with this release. We'}
        </MessageText>
      </Message>
    </Reading>
  );
}

function OfflineDialog() {
  return (
    <Overlay>
      <Dialog role="dialog" aria-labelledby="offline-title">
        <h2 id="offline-title">Offline Mode</h2>
        <Intro>
          Would you like to enable offline mode to manage and compose mail, contacts and<br />
          appointments when you're not connected to the Internet?
        </Intro>
        <Options>
          <Option>
            <label><input type="radio" name="offline" defaultChecked />Allow offline mode</label>
            <p>
              Copies of recent items will be synchronized and saved to this<br />
              computer. If you're using a shared or public computer, this is not<br />
              recommended. See Folder Properties to manage individual folder<br />
              offline settings.
            </p>
          </Option>
          <Option>
            <label><input type="radio" name="offline" />Don't allow offline mode</label>
            <p>
              You can read and compose new mail, edit and create contacts, and<br />
              edit and create appointments only when you're connected to the<br />
              Internet. Recent items will not be saved on this computer.
            </p>
          </Option>
        </Options>
        <DialogButtons>
          <button>OK</button>
          <button>Cancel</button>
        </DialogButtons>
      </Dialog>
    </Overlay>
  );
}

export default function App() {
  return (
    <Window>
      <GlobalStyle />
      <Browser />
      <Mail>
        <MailHeader />
        <MailToolbar />
        <Columns>
          <Folders />
          <Sash><i /><i /><i /><i /><i /></Sash>
          <List>
            <PaneHeader>
              <SortLabel>Sorted by Date <SortIcon /></SortLabel>
              <span>13 conversations</span>
            </PaneHeader>
            {conversations.map((item, i) => <Conversation key={i} item={item} />)}
          </List>
          <Sash />
          <ReadingPane />
        </Columns>
        <OfflineDialog />
      </Mail>
    </Window>
  );
}
